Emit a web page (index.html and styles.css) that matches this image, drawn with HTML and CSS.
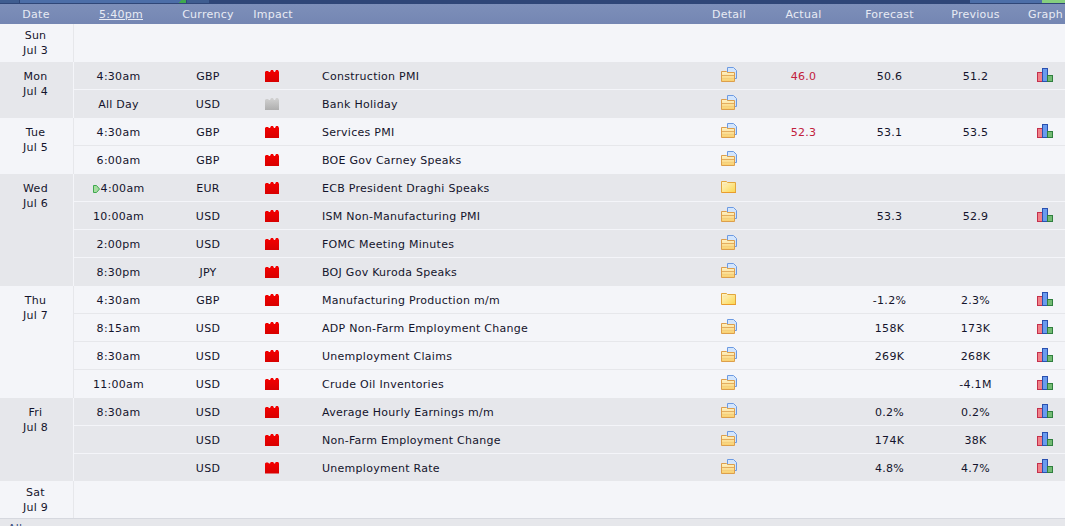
FILE: index.html
```html
<!DOCTYPE html>
<html lang="en">
<head>
<meta charset="utf-8">
<title>Calendar</title>
<link rel="stylesheet" href="styles.css">
</head>
<body>
<svg class="defs" width="0" height="0" aria-hidden="true">
  <defs>
    <linearGradient id="fold-grad" x1="0" y1="0" x2="0" y2="1"><stop offset="0" stop-color="#fff3c8"/><stop offset="1" stop-color="#f8cf6c"/></linearGradient>
    <linearGradient id="closed-grad" x1="0" y1="0" x2="1" y2="1"><stop offset="0" stop-color="#fff6cf"/><stop offset="1" stop-color="#fbd64e"/></linearGradient>
    <symbol id="folder" viewBox="0 0 16 15">
      <path d="M6.500 .5h6l3 3v8h-9z" fill="#d3e5fc" stroke="#6c9ae2"/>
      <path d="M.5 4.500h5l1 1h7v9h-13z" fill="url(#fold-grad)" stroke="#dd9f4c"/>
      <path d="M1 8.500h12" stroke="#e3ad60" fill="none"/>
      <path d="M1 11.500h12" stroke="#f5cf7c" fill="none"/>
    </symbol>
    <symbol id="folder-closed" viewBox="0 0 16 15">
      <path d="M.5 2.500h5l1 1h8v10h-14z" fill="url(#closed-grad)" stroke="#e2a63e"/>
      <path d="M2 4.500h4v2h-4z" fill="#fbe6a8"/>
      <path d="M1 13.500h14" stroke="#ea9c2c" fill="none"/>
    </symbol>
    <symbol id="chart" viewBox="0 0 16 14">
      <rect x=".5" y="4.500" width="5" height="9" fill="#f08088" stroke="#c4304c"/>
      <rect x="5.500" y=".5" width="5" height="13" fill="#6a9bee" stroke="#2a50b0"/>
      <rect x="10.500" y="7.500" width="5" height="6" fill="#74bb74" stroke="#2f7f3f"/>
    </symbol>
    <symbol id="arrow" viewBox="0 0 7 8">
      <path d="M.5 .5h3l3 3.500-3 3.500h-3z" fill="#a6dca0" stroke="#3ea84e"/>
    </symbol>
  </defs>
</svg>
<div class="topbar"><span class="tb tb-a"></span><span class="tb tb-b"></span><span class="tb tb-green"></span><span class="tb tb-c"></span><span class="tb-fill"></span><span class="tb tb-d"></span><span class="tb tb-lime"></span></div>
<table class="cal">
  <colgroup>
    <col class="c-date"><col class="c-time"><col class="c-cur"><col class="c-imp"><col class="c-name"><col class="c-det"><col class="c-act"><col class="c-fc"><col class="c-prev"><col class="c-gr">
  </colgroup>
  <thead>
    <tr><th class="th-date">Date</th><th><u>5:40pm</u></th><th>Currency</th><th>Impact</th><th></th><th>Detail</th><th>Actual</th><th>Forecast</th><th>Previous</th><th>Graph</th></tr>
  </thead>
  <tbody class="light">
    <tr class="tall"><td class="date">Sun<br>Jul 3</td><td colspan="9"></td></tr>
  </tbody>
  <tbody class="dark">
    <tr><td class="date" rowspan="2">Mon<br>Jul 4</td><td class="t">4:30am</td><td>GBP</td><td><i class="imp"></i></td><td class="name">Construction PMI</td><td><svg class="ic fold"><use href="#folder"/></svg></td><td class="red">46.0</td><td>50.6</td><td>51.2</td><td><svg class="ic"><use href="#chart"/></svg></td></tr>
    <tr><td class="t">All Day</td><td>USD</td><td><i class="imp gray"></i></td><td class="name">Bank Holiday</td><td><svg class="ic fold"><use href="#folder"/></svg></td><td></td><td></td><td></td><td></td></tr>
  </tbody>
  <tbody class="light">
    <tr><td class="date" rowspan="2">Tue<br>Jul 5</td><td class="t">4:30am</td><td>GBP</td><td><i class="imp"></i></td><td class="name">Services PMI</td><td><svg class="ic fold"><use href="#folder"/></svg></td><td class="red">52.3</td><td>53.1</td><td>53.5</td><td><svg class="ic"><use href="#chart"/></svg></td></tr>
    <tr><td class="t">6:00am</td><td>GBP</td><td><i class="imp"></i></td><td class="name">BOE Gov Carney Speaks</td><td><svg class="ic fold"><use href="#folder"/></svg></td><td></td><td></td><td></td><td></td></tr>
  </tbody>
  <tbody class="dark">
    <tr><td class="date" rowspan="4">Wed<br>Jul 6</td><td class="t"><svg class="now"><use href="#arrow"/></svg>4:00am</td><td>EUR</td><td><i class="imp"></i></td><td class="name">ECB President Draghi Speaks</td><td><svg class="ic fold"><use href="#folder-closed"/></svg></td><td></td><td></td><td></td><td></td></tr>
    <tr><td class="t">10:00am</td><td>USD</td><td><i class="imp"></i></td><td class="name">ISM Non-Manufacturing PMI</td><td><svg class="ic fold"><use href="#folder"/></svg></td><td></td><td>53.3</td><td>52.9</td><td><svg class="ic"><use href="#chart"/></svg></td></tr>
    <tr><td class="t">2:00pm</td><td>USD</td><td><i class="imp"></i></td><td class="name">FOMC Meeting Minutes</td><td><svg class="ic fold"><use href="#folder"/></svg></td><td></td><td></td><td></td><td></td></tr>
    <tr><td class="t">8:30pm</td><td>JPY</td><td><i class="imp"></i></td><td class="name">BOJ Gov Kuroda Speaks</td><td><svg class="ic fold"><use href="#folder"/></svg></td><td></td><td></td><td></td><td></td></tr>
  </tbody>
  <tbody class="light">
    <tr><td class="date" rowspan="4">Thu<br>Jul 7</td><td class="t">4:30am</td><td>GBP</td><td><i class="imp"></i></td><td class="name">Manufacturing Production m/m</td><td><svg class="ic fold"><use href="#folder-closed"/></svg></td><td></td><td>-1.2%</td><td>2.3%</td><td><svg class="ic"><use href="#chart"/></svg></td></tr>
    <tr><td class="t">8:15am</td><td>USD</td><td><i class="imp"></i></td><td class="name">ADP Non-Farm Employment Change</td><td><svg class="ic fold"><use href="#folder"/></svg></td><td></td><td>158K</td><td>173K</td><td><svg class="ic"><use href="#chart"/></svg></td></tr>
    <tr><td class="t">8:30am</td><td>USD</td><td><i class="imp"></i></td><td class="name">Unemployment Claims</td><td><svg class="ic fold"><use href="#folder"/></svg></td><td></td><td>269K</td><td>268K</td><td><svg class="ic"><use href="#chart"/></svg></td></tr>
    <tr><td class="t">11:00am</td><td>USD</td><td><i class="imp"></i></td><td class="name">Crude Oil Inventories</td><td><svg class="ic fold"><use href="#folder"/></svg></td><td></td><td></td><td>-4.1M</td><td><svg class="ic"><use href="#chart"/></svg></td></tr>
  </tbody>
  <tbody class="dark">
    <tr><td class="date" rowspan="3">Fri<br>Jul 8</td><td class="t">8:30am</td><td>USD</td><td><i class="imp"></i></td><td class="name">Average Hourly Earnings m/m</td><td><svg class="ic fold"><use href="#folder"/></svg></td><td></td><td>0.2%</td><td>0.2%</td><td><svg class="ic"><use href="#chart"/></svg></td></tr>
    <tr><td class="t"></td><td>USD</td><td><i class="imp"></i></td><td class="name">Non-Farm Employment Change</td><td><svg class="ic fold"><use href="#folder"/></svg></td><td></td><td>174K</td><td>38K</td><td><svg class="ic"><use href="#chart"/></svg></td></tr>
    <tr class="short"><td class="t"></td><td>USD</td><td><i class="imp"></i></td><td class="name">Unemployment Rate</td><td><svg class="ic fold"><use href="#folder"/></svg></td><td></td><td>4.8%</td><td>4.7%</td><td><svg class="ic"><use href="#chart"/></svg></td></tr>
  </tbody>
  <tbody class="light">
    <tr class="tall sat"><td class="date">Sat<br>Jul 9</td><td colspan="9"></td></tr>
  </tbody>
</table>
<div class="footer">All</div>
</body>
</html>
```

FILE: styles.css
```css
html, body { margin: 0; height: 100%; overflow: hidden; background: #e6e7eb; }
body { font: 11px/15px "DejaVu Sans", Verdana, sans-serif; color: #14142c; letter-spacing: .27px; }
.defs { position: absolute; }
.topbar { display: flex; height: 4px; background: #2f4677; }
.tb { display: block; height: 3px; }
.tb-fill { flex: 1; }
.tb-a { width: 19px; background: #3f5d90; border-right: 1px solid #2f4677; }
.tb-b { width: 155px; background: #4c6ea8; }
.tb-green { width: 11px; background: linear-gradient(135deg, #4c6ea8 45%, #3ea84e 46%); }
.tb-c { width: 23px; background: #3f5d90; border-left: 1px solid #2f4677; box-sizing: border-box; }
.tb-d { width: 72px; background: #4c6ea8; }
.tb-lime { width: 23px; background: #86cf7e; }
.cal { width: 1065px; table-layout: fixed; border-collapse: separate; border-spacing: 0; }
.c-date { width: 74px; } .c-time { width: 94px; } .c-cur { width: 80px; } .c-imp { width: 50px; }
.c-name { width: 397px; } .c-det { width: 68px; } .c-act { width: 81px; } .c-fc { width: 91px; }
.c-prev { width: 81px; } .c-gr { width: 49px; }
th { height: 20px; padding: 0; background: linear-gradient(#7d8fb9, #7486b3); color: #e8ebf4; font-weight: normal; text-align: center; white-space: nowrap; }
th:last-child { padding-left: 10px; }
.th-date { padding-right: 2px; }
td { box-sizing: border-box; height: 28px; padding: 2px 0 0; text-align: center; border-bottom: 1px solid #f4f5f9; vertical-align: middle; white-space: nowrap; }
.light td { background: #f4f5f9; border-bottom-color: #e6e7eb; }
.dark td { background: #e6e7eb; }
tbody tr:last-child td { border-bottom-color: transparent; }
td:last-child:not([colspan]) { padding-left: 8px; }
.short td { height: 27px; }
.tall td { height: 38px; }
.sat td { height: 37px; }
td.date { vertical-align: top; padding: 7px 2px 0 0; height: auto; border-right: 1px solid #f4f5f9; border-bottom: 0; }
.light td.date { border-right-color: #e6e7eb; }
.tall td.date, .sat td.date { padding-top: 4px; }
td.t { padding-right: 5px; }
td.name { text-align: left; padding-left: 24px; }
.red { color: #c2203c; }
.imp { display: inline-block; width: 14px; height: 12px; margin-right: 2px; vertical-align: -2px; background: linear-gradient(#f40000, #d80000);
  clip-path: polygon(0 2px, 1px 1px, 3px 1px, 4px 2px, 5px 2px, 6px 0, 8px 0, 9px 2px, 10px 2px, 11px 0, 13px 0, 14px 2px, 14px 100%, 0 100%); }
.imp.gray { background: linear-gradient(#d2d2d2, #aeaeae); }
.ic { width: 16px; height: 14px; vertical-align: 0; }
.ic.fold { height: 15px; vertical-align: 0; }
.now { width: 7px; height: 8px; margin-right: 1px; vertical-align: -1px; }
.footer { height: 8px; padding: 2px 0 0 8px; border-top: 1px solid #d6d8df; color: #3c4f80; }
```
